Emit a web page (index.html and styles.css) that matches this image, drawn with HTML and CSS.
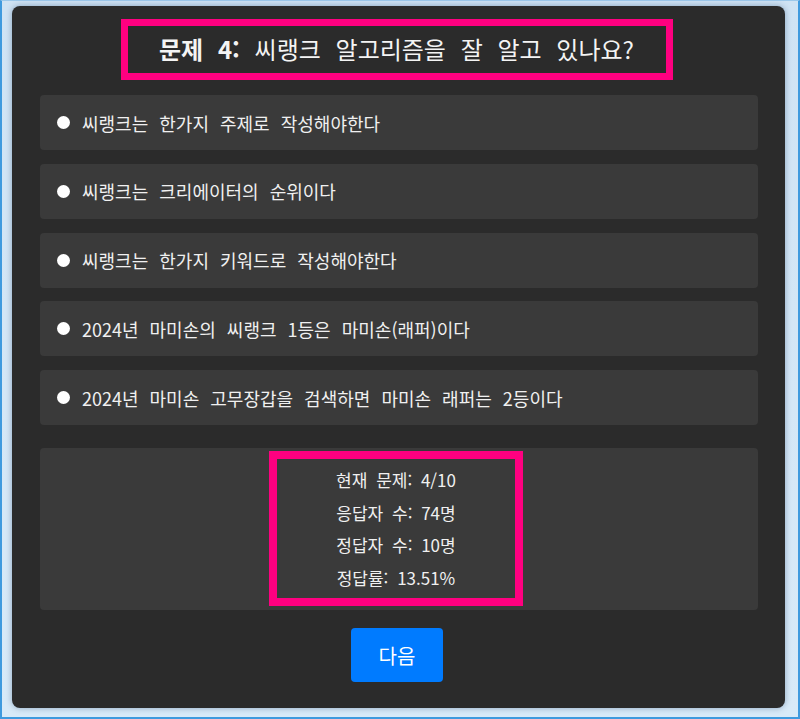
FILE: index.html
```html
<!DOCTYPE html>
<html lang="ko">
<head>
<meta charset="utf-8">
<title>퀴즈</title>
<link rel="stylesheet" href="styles.css">
</head>
<body>
<div class="frame">
  <main class="panel">
    <div class="title-wrap">
      <h2 class="title"><strong>문제 4:</strong> 씨랭크 알고리즘을 잘 알고 있나요?</h2>
    </div>
    <ul class="options">
      <li class="option"><span class="dot"></span><span>씨랭크는 한가지 주제로 작성해야한다</span></li>
      <li class="option"><span class="dot"></span><span>씨랭크는 크리에이터의 순위이다</span></li>
      <li class="option"><span class="dot"></span><span>씨랭크는 한가지 키워드로 작성해야한다</span></li>
      <li class="option"><span class="dot"></span><span>2024년 마미손의 씨랭크 1등은 마미손(래퍼)이다</span></li>
      <li class="option"><span class="dot"></span><span>2024년 마미손 고무장갑을 검색하면 마미손 래퍼는 2등이다</span></li>
    </ul>
    <section class="stats">
      <div class="stats-box">
        <p>현재 문제: 4/10</p>
        <p>응답자 수: 74명</p>
        <p>정답자 수: 10명</p>
        <p>정답률: 13.51%</p>
      </div>
    </section>
    <div class="actions">
      <button class="next" type="button">다음</button>
    </div>
  </main>
</div>
</body>
</html>
```
FILE: styles.css
```css
* { box-sizing: border-box; }
html, body { margin: 0; padding: 0; }
body {
  width: 800px;
  height: 719px;
  background: #d4e7f6;
  font-family: "Noto Sans CJK KR", "Noto Sans", sans-serif;
  overflow: hidden;
}
.frame {
  height: 719px;
  border: 2px solid #3f9ade;
  border-top: 1px solid #9cc8ea;
  background: linear-gradient(180deg, #cfe3f4 0%, #d8eaf8 100%);
  padding: 5px 13px 9px 10px;
}
.panel {
  width: 773px;
  height: 702px;
  background: #2b2b2b;
  border-radius: 8px;
  padding: 13px 27px 0 28px;
  color: #f0f0f0;
  box-shadow: 0 0 6px rgba(0, 40, 90, 0.35);
}
.title-wrap {
  display: flex;
  justify-content: center;
  padding-right: 5px;
}
.title {
  margin: 0;
  width: 552px;
  height: 61px;
  border: 7px solid #ff0080;
  font-size: 24px;
  font-weight: 400;
  word-spacing: 8px;
  line-height: 46px;
  text-align: center;
  color: #f4f4f4;
  white-space: nowrap;
}
.title strong { font-weight: 700; }
.options {
  list-style: none;
  margin: 15px 0 0;
  padding: 0;
  display: flex;
  flex-direction: column;
  gap: 13.75px;
}
.option {
  height: 55px;
  background: #3a3a3a;
  border-radius: 4px;
  display: flex;
  align-items: center;
  padding-left: 17px;
  font-size: 18px;
  word-spacing: 6px;
  color: #f0f0f0;
}
.dot {
  width: 13px;
  height: 13px;
  border-radius: 50%;
  background: #fff;
  margin-right: 12px;
  flex: none;
}
.stats {
  margin-top: 23px;
  height: 162px;
  background: #3a3a3a;
  border-radius: 4px;
  display: flex;
  justify-content: center;
  padding-top: 3px;
}
.stats-box {
  width: 254px;
  height: 155px;
  border: 8px solid #ff0080;
  padding-top: 5px;
  margin-right: 6px;
  text-align: center;
  font-size: 17px;
  word-spacing: 4px;
  color: #f0f0f0;
}
.stats-box p {
  margin: 0;
  line-height: 32.5px;
}
.actions {
  display: flex;
  justify-content: center;
  margin-top: 18px;
  padding-right: 4px;
}
.next {
  width: 92px;
  height: 54px;
  background: #007bff;
  border: none;
  border-radius: 4px;
  color: #fff;
  font-family: inherit;
  font-size: 20px;
  cursor: pointer;
}
```
